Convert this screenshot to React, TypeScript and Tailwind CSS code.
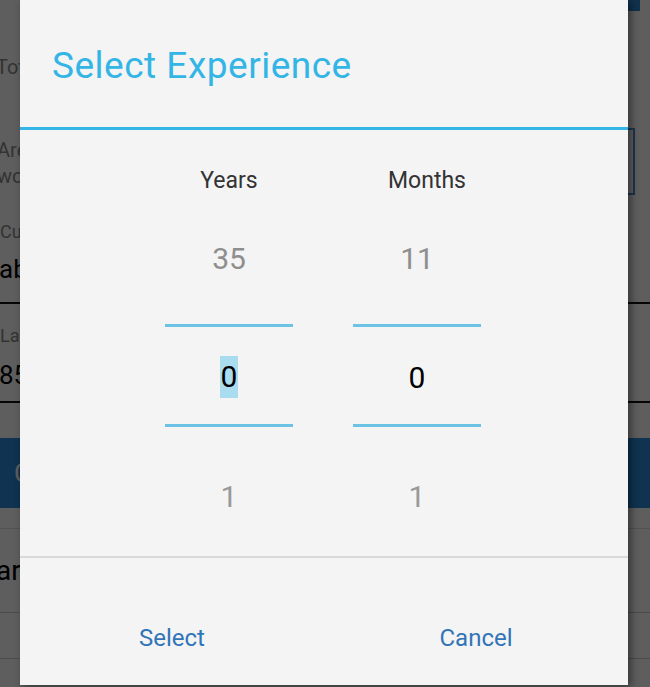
import React from "react";

type Column = {
    label: string;
    prev: string;
    value: string;
    next: string;
    selected?: boolean;
};

const columns: Column[] = [
    { label: "Years", prev: "35", value: "0", next: "1", selected: true },
    { label: "Months", prev: "11", value: "0", next: "1" },
];

function BackgroundForm() {
    return (
        <div className="flex flex-col w-full h-full bg-white text-[#8a8a8a]">
            <div className="flex justify-end h-[11px]">
                <div className="w-[12px] h-full mr-[10px] bg-[#2f86d0]"></div>
            </div>
            <div className="flex items-center h-[86px] pt-[26px] -ml-[4px] text-[20px]">Total Experience</div>
            <div className="flex items-start h-[103px]">
                <div className="flex flex-col mt-[40px] -ml-[3px] text-[20px] leading-[26px] text-[#8a8a8a]">
                    <span>Are you currently</span>
                    <span>working?</span>
                </div>
                <div className="ml-auto mr-[15px] mt-[31px] w-[80px] h-[67px] border-2 border-[#4a8fd6]"></div>
            </div>
            <div className="flex flex-col h-[104px] border-b-2 border-[#111]">
                <span className="mt-[20px] text-[18px] leading-[24px]">Current Company</span>
                <span className="mt-[8px] -ml-[1px] text-[26px] leading-[34px] text-black">abc</span>
            </div>
            <div className="flex flex-col h-[99px] border-b-2 border-[#111]">
                <span className="mt-[20px] text-[18px] leading-[24px]">Last Salary</span>
                <span className="mt-[10px] -ml-[1px] text-[26px] leading-[34px] text-black">85000</span>
            </div>
            <div className="h-[35px]"></div>
            <div className="flex items-center h-[70px] pl-[14px] bg-[#2a8ad8] text-white text-[26px]">CONTINUE</div>
            <div className="h-[21px] border-b border-[#ddd]"></div>
            <div className="flex items-center h-[84px] -ml-[4px] border-b border-[#ccc] text-[28px] text-black">around</div>
            <div className="h-[46px] border-b border-[#ccc]"></div>
        </div>
    );
}

function PickerColumn({ column }: { column: Column }) {
    return (
        <div className="flex flex-col w-[128px] items-center">
            <div className="flex items-center justify-center h-[112px] text-[30px] text-[#8e8e8e]">{column.prev}</div>
            <div className="w-full h-[3px] mt-[10px] bg-[#6cc3e6]"></div>
            <div className="flex items-center justify-center h-[97px] pt-[3px] text-[30px] text-black">
                {column.selected ? (
                    <span className="inline-block h-[42px] px-[1px] leading-[42px] bg-[#a9dcef]">{column.value}</span>
                ) : (
                    <span>{column.value}</span>
                )}
            </div>
            <div className="w-full h-[3px] bg-[#6cc3e6]"></div>
            <div className="flex items-center justify-center h-[119px] mt-[10px] text-[30px] text-[#999999]">{column.next}</div>
        </div>
    );
}

function ExperienceDialog() {
    return (
        <div className="absolute left-[20px] top-0 flex flex-col w-[608px] h-[685px] bg-[#f4f4f4] shadow-[3px_2px_8px_rgba(0,0,0,0.45)]">
            <div className="h-[127px] pl-[32px] pt-[45px]">
                <h2 className="text-[37px] leading-[42px] tracking-[0.5px] text-[#33b5e5]">Select Experience</h2>
            </div>
            <div className="h-[3px] bg-[#33b5e5]"></div>

            <div className="flex flex-col h-[426px]">
                <div className="flex h-[42px] mt-[30px] text-[23px] leading-[42px] text-[#333]">
                    <span className="w-[128px] ml-[145px] text-center">Years</span>
                    <span className="w-[128px] ml-[70px] text-center">Months</span>
                </div>
                <div className="flex gap-[60px] pl-[145px]">
                    {columns.map((column) => (
                        <PickerColumn key={column.label} column={column} />
                    ))}
                </div>
            </div>

            <div className="h-[2px] bg-[#d9d9d9]"></div>
            <div className="flex flex-1 pt-[58px] text-[24px] leading-[44px] text-[#3274b8]">
                <button className="flex-1 h-[44px] text-center">Select</button>
                <button className="flex-1 h-[44px] text-center">Cancel</button>
            </div>
        </div>
    );
}

export default function App() {
    return (
        <div className="relative w-[650px] h-[687px] overflow-hidden font-[Roboto,sans-serif]">
            <BackgroundForm />
            <div className="absolute inset-0 bg-black/[0.63]"></div>
            <ExperienceDialog />
        </div>
    );
}
